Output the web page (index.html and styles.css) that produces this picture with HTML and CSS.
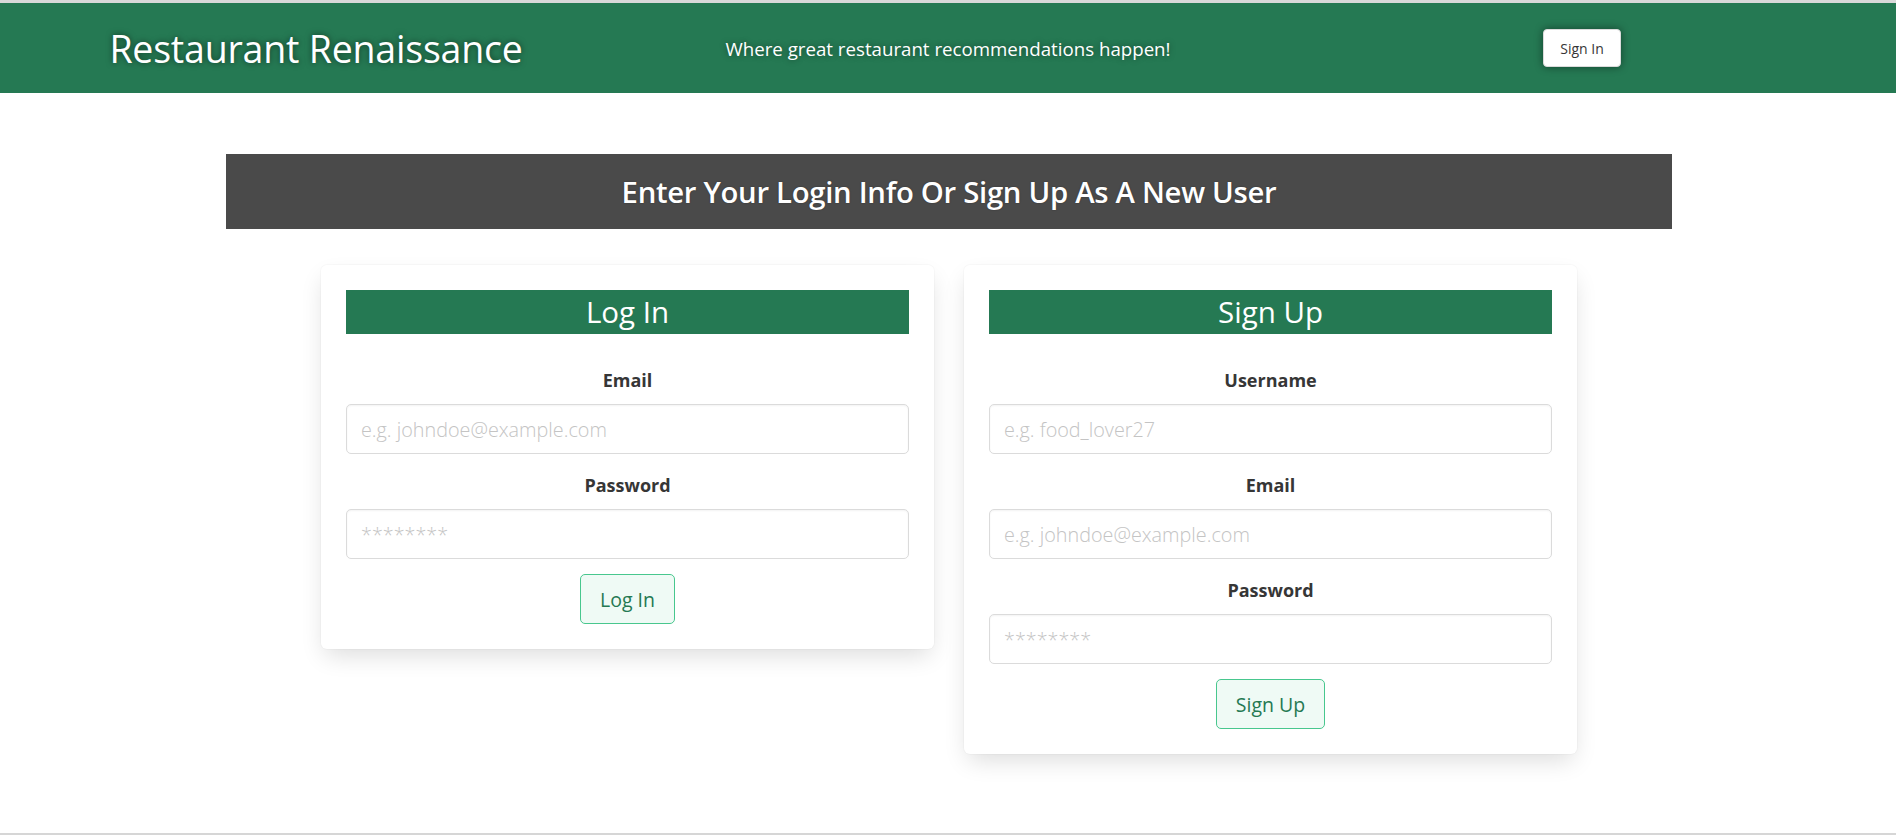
FILE: index.html
```html
<!DOCTYPE html>
<html lang="en">
<head>
<meta charset="utf-8">
<title>Restaurant Renaissance</title>
<link rel="stylesheet" href="styles.css">
</head>
<body>
<div class="page">
  <header class="topbar">
    <div class="topbar-col">
      <h1 class="brand">Restaurant Renaissance</h1>
    </div>
    <div class="topbar-col">
      <p class="tagline">Where great restaurant recommendations happen!</p>
    </div>
    <div class="topbar-col">
      <button class="btn-signin" type="button">Sign In</button>
    </div>
  </header>

  <main class="main">
    <div class="banner">
      <h2 class="banner-title">Enter Your Login Info Or Sign Up As A New User</h2>
    </div>

    <div class="cards">
      <section class="card">
        <h3 class="card-title">Log In</h3>
        <form class="form">
          <div class="fields">
            <div class="field">
              <label class="label">Email</label>
              <input class="input" type="text" placeholder="e.g. johndoe@example.com">
            </div>
            <div class="field">
              <label class="label">Password</label>
              <input class="input" type="text" placeholder="********">
            </div>
          </div>
          <div class="actions">
            <button class="btn-submit" type="button">Log In</button>
          </div>
        </form>
      </section>

      <section class="card">
        <h3 class="card-title">Sign Up</h3>
        <form class="form">
          <div class="fields">
            <div class="field">
              <label class="label">Username</label>
              <input class="input" type="text" placeholder="e.g. food_lover27">
            </div>
            <div class="field">
              <label class="label">Email</label>
              <input class="input" type="text" placeholder="e.g. johndoe@example.com">
            </div>
            <div class="field">
              <label class="label">Password</label>
              <input class="input" type="text" placeholder="********">
            </div>
          </div>
          <div class="actions">
            <button class="btn-submit" type="button">Sign Up</button>
          </div>
        </form>
      </section>
    </div>
  </main>

  <footer class="bottom-rule"></footer>
</div>
</body>
</html>
```

FILE: styles.css
```css
* {
  box-sizing: border-box;
}

html, body {
  margin: 0;
  padding: 0;
  height: 100%;
}

body {
  font-family: "Open Sans", "Noto Sans", "Liberation Sans", sans-serif;
  color: #363636;
  background: #ffffff;
}

.page {
  min-height: 100vh;
  display: flex;
  flex-direction: column;
  border-top: 3px solid #d9d9d9;
}

/* Header */
.topbar {
  background: #257953;
  height: 90px;
  display: grid;
  grid-template-columns: 1fr 1fr 1fr;
  align-items: center;
}

.topbar-col {
  display: flex;
  justify-content: center;
  align-items: center;
}

.brand {
  margin: 0;
  font-size: 37.5px;
  font-weight: 400;
  color: #ffffff;
  line-height: 1.2;
  text-shadow: 0 0 6px rgba(0, 0, 0, 0.55);
  letter-spacing: -0.2px;
}

.tagline {
  margin: 0;
  font-size: 18.7px;
  color: #ffffff;
  text-shadow: 0 0 6px rgba(0, 0, 0, 0.45);
}

.btn-signin {
  font-family: inherit;
  font-size: 14px;
  height: 38px;
  padding: 0 16px;
  background: #ffffff;
  color: #363636;
  border: 1px solid #dbdbdb;
  border-radius: 4px;
  box-shadow: 0 0 8px rgba(0, 0, 0, 0.45);
  margin-left: 4px;
}

/* Main */
.main {
  flex: 1;
  display: flex;
  flex-direction: column;
  align-items: center;
  padding-top: 61px;
  padding-left: 2px;
}

.banner {
  width: 1446px;
  height: 75px;
  background: #4a4a4a;
  display: flex;
  align-items: center;
  justify-content: center;
}

.banner-title {
  margin: 0;
  color: #ffffff;
  font-size: 29.3px;
  font-weight: 600;
  letter-spacing: -0.3px;
  text-shadow: 0 0 2px rgba(0, 0, 0, 0.3);
}

.cards {
  display: flex;
  justify-content: center;
  align-items: flex-start;
  gap: 30px;
  margin-top: 36px;
  padding-bottom: 40px;
}

.card {
  width: 613px;
  background: #ffffff;
  border-radius: 6px;
  padding: 25px;
  box-shadow: 0 10px 24px -4px rgba(10, 10, 10, 0.14), 0 0 0 1px rgba(10, 10, 10, 0.02);
}

.card-title {
  margin: 0;
  height: 44px;
  line-height: 44px;
  background: #257953;
  color: #ffffff;
  text-align: center;
  font-size: 29.5px;
  font-weight: 400;
}

.form {
  margin-top: 34px;
}

.fields {
  display: flex;
  flex-direction: column;
  gap: 19px;
}

.field {
  display: flex;
  flex-direction: column;
  gap: 12px;
}

.label {
  display: block;
  text-align: center;
  font-size: 18px;
  line-height: 24px;
  font-weight: 700;
  color: #363636;
}

.input {
  width: 100%;
  height: 50px;
  font-family: inherit;
  font-size: 19.8px;
  padding: 0 14px;
  border: 1px solid #dbdbdb;
  border-radius: 5px;
  color: #363636;
  background: #ffffff;
  box-shadow: inset 0 1px 2px rgba(10, 10, 10, 0.05);
  outline: none;
}

.input::placeholder {
  color: #c4c4c4;
  font-weight: 300;
}

.actions {
  display: flex;
  justify-content: center;
  margin-top: 15px;
}

.btn-submit {
  font-family: inherit;
  font-size: 19.5px;
  height: 50px;
  padding: 0 19px;
  background: #effaf5;
  color: #257953;
  border: 1px solid #48c78e;
  border-radius: 5px;
}

.bottom-rule {
  height: 2px;
  background: #d6d6d6;
}
```
